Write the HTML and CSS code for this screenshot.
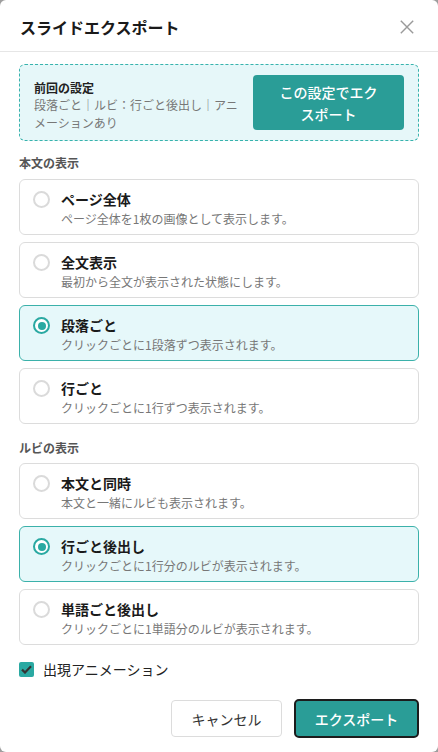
FILE: index.html
```html
<!DOCTYPE html>
<html lang="ja">
<head>
<meta charset="utf-8">
<link rel="stylesheet" href="styles.css">
</head>
<body>
<div class="dialog">
  <header class="header">
    <h1 class="title">スライドエクスポート</h1>
    <button class="close" aria-label="閉じる">
      <svg width="14" height="14" viewBox="0 0 14 14"><path d="M0.8 0.8L13.2 13.2M13.2 0.8L0.8 13.2" stroke="#9a9a9a" stroke-width="1.4" fill="none"/></svg>
    </button>
  </header>
  <div class="body">
    <div class="banner">
      <div class="banner-text">
        <div class="banner-title">前回の設定</div>
        <div class="banner-sub">段落ごと｜ルビ：行ごと後出し｜アニメーションあり</div>
      </div>
      <button class="banner-btn">この設定でエク<br>スポート</button>
    </div>

    <div class="section-label first">本文の表示</div>
    <div class="options">
      <div class="option"><span class="radio"></span><div><div class="opt-title">ページ全体</div><div class="opt-desc">ページ全体を1枚の画像として表示します。</div></div></div>
      <div class="option"><span class="radio"></span><div><div class="opt-title">全文表示</div><div class="opt-desc">最初から全文が表示された状態にします。</div></div></div>
      <div class="option selected"><span class="radio"></span><div><div class="opt-title">段落ごと</div><div class="opt-desc">クリックごとに1段落ずつ表示されます。</div></div></div>
      <div class="option"><span class="radio"></span><div><div class="opt-title">行ごと</div><div class="opt-desc">クリックごとに1行ずつ表示されます。</div></div></div>
    </div>

    <div class="section-label">ルビの表示</div>
    <div class="options">
      <div class="option"><span class="radio"></span><div><div class="opt-title">本文と同時</div><div class="opt-desc">本文と一緒にルビも表示されます。</div></div></div>
      <div class="option selected"><span class="radio"></span><div><div class="opt-title">行ごと後出し</div><div class="opt-desc">クリックごとに1行分のルビが表示されます。</div></div></div>
      <div class="option"><span class="radio"></span><div><div class="opt-title">単語ごと後出し</div><div class="opt-desc">クリックごとに1単語分のルビが表示されます。</div></div></div>
    </div>

    <label class="check-row">
      <span class="checkbox">
        <svg width="11" height="9" viewBox="0 0 11 9"><path d="M1 4.6L4 7.5L10 1.3" stroke="#333" stroke-width="2.2" fill="none"/></svg>
      </span>
      <span class="check-label">出現アニメーション</span>
    </label>

    <div class="footer">
      <button class="btn cancel">キャンセル</button>
      <button class="btn export">エクスポート</button>
    </div>
  </div>
</div>
</body>
</html>
```
FILE: styles.css
```css
* { box-sizing: border-box; }
html, body { margin: 0; padding: 0; }
body {
  background: #9e9e9e;
  font-family: "Noto Sans CJK JP", "Noto Sans", sans-serif;
  color: #1a1a1a;
}
.dialog {
  width: 438px;
  height: 752px;
  background: #fff;
  border-radius: 6px;
  overflow: hidden;
}
.header {
  height: 52px;
  border-bottom: 1px solid #e6e6e6;
  display: flex;
  align-items: center;
  justify-content: space-between;
  padding: 2px 24px 0 20px;
}
.title {
  margin: 0;
  font-size: 16px;
  font-weight: 700;
  line-height: 24px;
  color: #1a1a1a;
}
.close {
  background: none;
  border: 0;
  padding: 0;
  display: flex;
}
.body { padding: 12px 19px 0; }
.banner {
  border: 1px dashed #38b3ad;
  background: #e6f7f9;
  border-radius: 6px;
  height: 77px;
  padding: 10px 14px;
  display: flex;
  align-items: center;
  gap: 12px;
}
.banner-text { flex: 1; padding-top: 6px; }
.banner-title {
  font-size: 12px;
  font-weight: 700;
  line-height: 16px;
  color: #222;
}
.banner-sub {
  font-size: 12px;
  line-height: 18px;
  color: #777;
}
.banner-btn {
  width: 151px;
  height: 55px;
  flex: none;
  background: #2a9d97;
  color: #fff;
  border: 0;
  border-radius: 4px;
  font-family: inherit;
  font-size: 14px;
  font-weight: 500;
  line-height: 22px;
  padding: 0;
}
.section-label {
  font-size: 12px;
  font-weight: 700;
  color: #555;
  line-height: 18px;
  margin: 15px 0 6px;
}
.section-label.first { margin-top: 13px; margin-bottom: 7px; }
.options { display: flex; flex-direction: column; gap: 7px; }
.option {
  height: 56px;
  border: 1px solid #dcdcdc;
  border-radius: 6px;
  display: flex;
  align-items: flex-start;
  padding: 9px 12px 6px 13px;
  gap: 11px;
  background: #fff;
}
.option.selected {
  background: #e6f8fa;
  border-color: #3bb1aa;
}
.radio {
  width: 17px;
  height: 17px;
  border: 2px solid #dadada;
  border-radius: 50%;
  flex: none;
  margin-top: 2px;
  background: #fff;
  position: relative;
}
.selected .radio { border-color: #2aa9a2; }
.selected .radio::after {
  content: "";
  position: absolute;
  left: 2.5px;
  top: 2.5px;
  width: 8px;
  height: 8px;
  border-radius: 50%;
  background: #2aa9a2;
}
.opt-title {
  font-size: 14px;
  font-weight: 700;
  line-height: 21px;
  color: #1a1a1a;
}
.opt-desc {
  font-size: 12px;
  line-height: 18px;
  color: #777;
}
.check-row {
  display: flex;
  align-items: center;
  gap: 9px;
  margin-top: 16px;
  height: 16px;
}
.checkbox {
  width: 15px;
  height: 15px;
  border-radius: 2px;
  background: #2aa9a2;
  display: flex;
  align-items: center;
  justify-content: center;
}
.check-label { font-size: 14px; color: #222; line-height: 20px; }
.footer {
  display: flex;
  justify-content: flex-end;
  align-items: center;
  gap: 12px;
  margin-top: 22px;
}
.btn {
  font-family: inherit;
  font-size: 14px;
  border-radius: 4px;
  padding: 0;
}
.cancel {
  width: 111px;
  height: 37px;
  background: #fff;
  border: 1px solid #dcdcdc;
  color: #333;
}
.export {
  width: 125px;
  height: 39px;
  background: #2a9d97;
  border: 2px solid #1c1c1c;
  border-radius: 5px;
  color: #fff;
  font-weight: 500;
}
```
